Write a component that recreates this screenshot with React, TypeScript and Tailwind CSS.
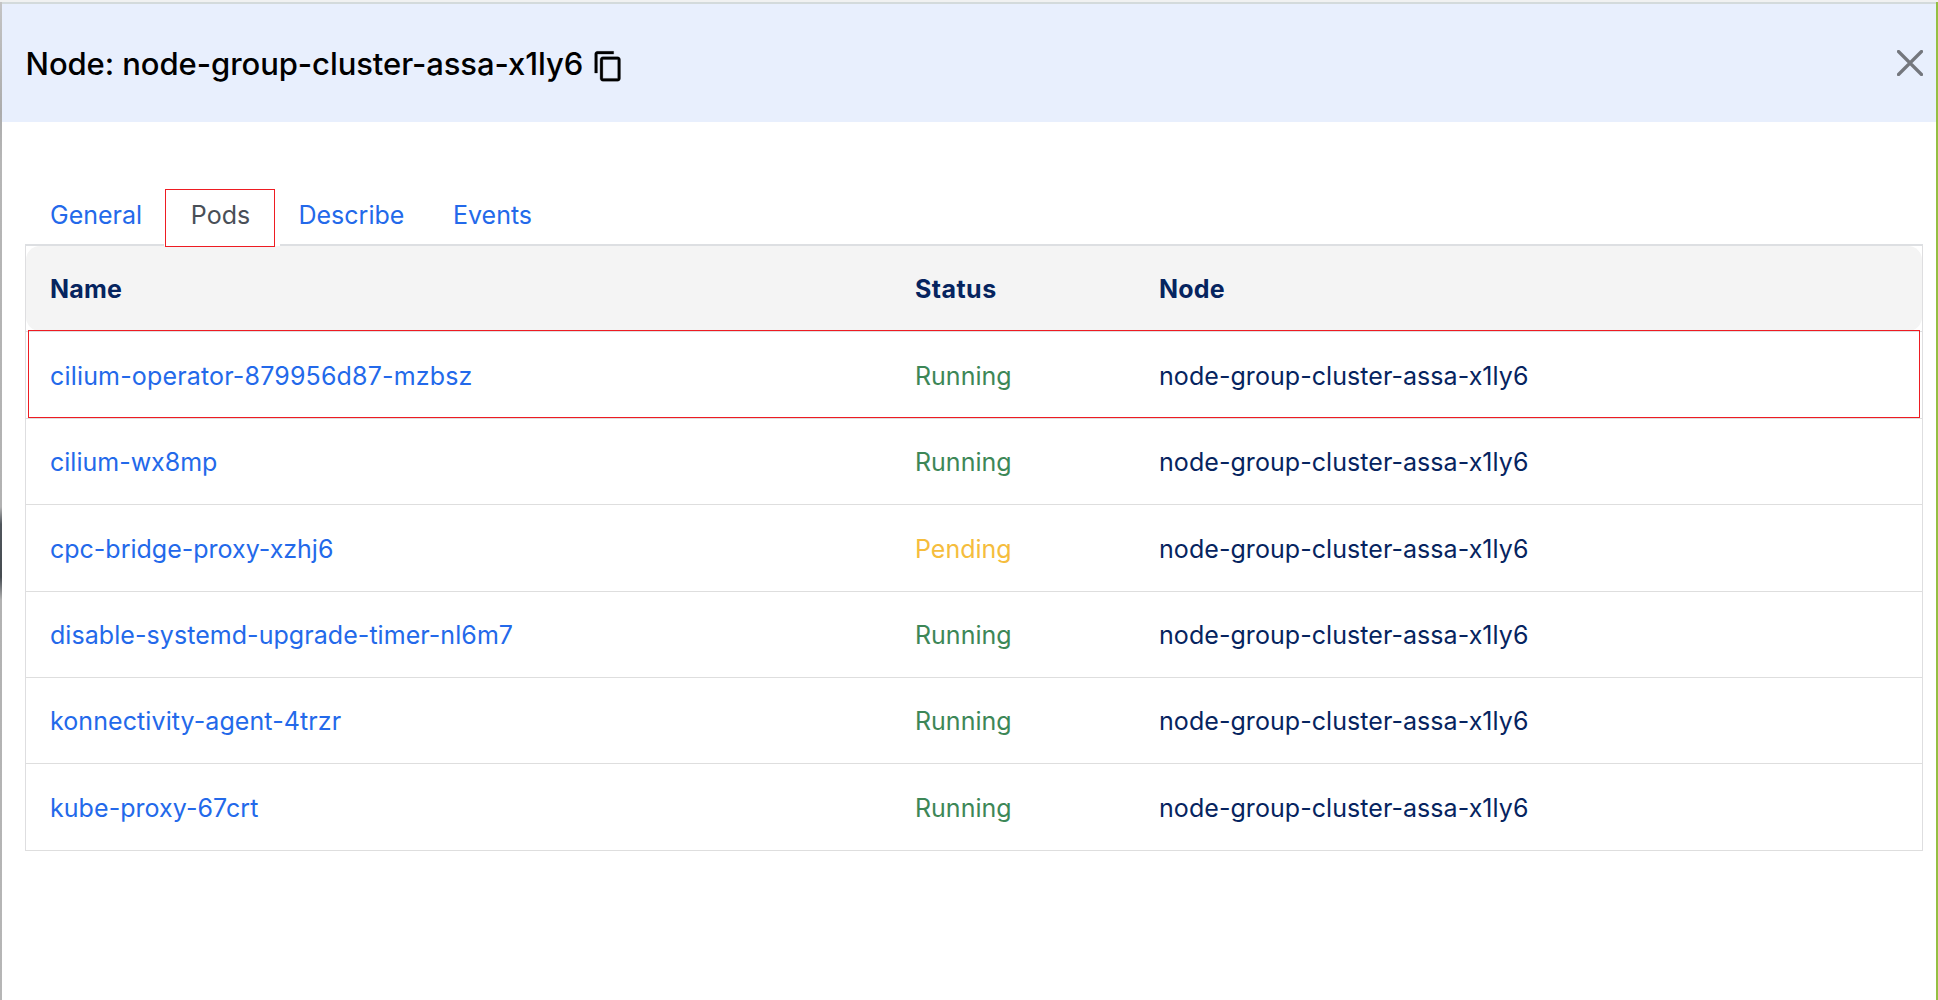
type Pod = {
  name: string;
  status: 'Running' | 'Pending';
  height: string;
  tracking: string;
  selected?: boolean;
};

const pods: Pod[] = [
  { name: 'cilium-operator-879956d87-mzbsz', status: 'Running', height: 'h-[87px] pt-[2px]', tracking: 'tracking-[0.17px]', selected: true },
  { name: 'cilium-wx8mp', status: 'Running', height: 'h-[86px]', tracking: 'tracking-normal' },
  { name: 'cpc-bridge-proxy-xzhj6', status: 'Pending', height: 'h-[87px] pt-[2px]', tracking: 'tracking-normal' },
  { name: 'disable-systemd-upgrade-timer-nl6m7', status: 'Running', height: 'h-[86px]', tracking: 'tracking-[0.06px]' },
  { name: 'konnectivity-agent-4trzr', status: 'Running', height: 'h-[86px]', tracking: 'tracking-[0.09px]' },
  { name: 'kube-proxy-67crt', status: 'Running', height: 'h-[87px] pt-[2px]', tracking: 'tracking-[0.06px]' },
];

const columns = 'grid grid-cols-[865px_244px_1fr] items-center pl-6';

function CopyIcon() {
  return (
    <svg viewBox="0 0 24 24" className="size-[32.5px] fill-black stroke-black stroke-[0.2]" aria-hidden="true">
      <path d="M16 1H4c-1.1 0-2 .9-2 2v14h2V3h12V1zm3 4H8c-1.1 0-2 .9-2 2v14c0 1.1.9 2 2 2h11c1.1 0 2-.9 2-2V7c0-1.1-.9-2-2-2zm0 16H8V7h11v14z" />
    </svg>
  );
}

function CloseIcon() {
  return (
    <svg viewBox="0 0 26 26" className="size-[26px]" aria-hidden="true">
      <path d="M1.5 1.5l23 23M24.5 1.5l-23 23" fill="none" stroke="#74777d" strokeWidth="3.2" strokeLinecap="round" />
    </svg>
  );
}

export default function App() {
  return (
    <div className="flex h-[1000px] w-[1938px] flex-col overflow-hidden bg-white font-['Inter',sans-serif] text-[25px] leading-8">
      <div className="h-[2px] shrink-0 bg-[#f0f1f1]" />
      <div className="flex min-h-0 flex-1">
        <div className="w-[2px] shrink-0 bg-[linear-gradient(to_bottom,#c4c4c4_0px,#acacac_110px,#b6b6b6_160px,#b2b2b2_505px,#50565c_522px,#454b51_575px,#b2b2b2_598px,#b6b6b6_100%)]" />
        <main className="flex min-w-0 flex-1 flex-col">
          <header className="flex h-[120px] shrink-0 items-center justify-between border-t-2 border-[#d3dadb] bg-[#e8effd] pr-[13px] pl-[23.5px]">
            <div className="flex items-center gap-[9px] pt-[2px]">
              <h1 className="text-[31px] leading-10 font-medium tracking-[-0.07px] text-black">
                Node: node-group-cluster-assa-x1ly6
              </h1>
              <button type="button" aria-label="Copy" className="mt-[5px]">
                <CopyIcon />
              </button>
            </div>
            <button type="button" aria-label="Close">
              <CloseIcon />
            </button>
          </header>

          <nav className="mt-[67px] flex h-[55px] shrink-0 items-start pl-[23px] text-[#2369ea]">
            <div className="flex h-[57px] w-[139px] items-center border-b-2 border-[#dddfe2] pb-[4px] pl-[25px]">General</div>
            <div className="relative z-10 mr-[5px] -mb-[3px] ml-px flex h-[58px] w-[110px] items-center justify-center border border-[#ee1c22] bg-white pb-[6px] pl-px text-[#494f57]">
              Pods
            </div>
            <div className="flex h-[57px] w-[172px] items-center border-b-2 border-[#dddfe2] pb-[4px] pl-[18.5px]">Describe</div>
            <div className="mr-[13px] flex h-[57px] flex-1 items-center border-b-2 border-[#dddfe2] pb-[4px] pl-px">Events</div>
          </nav>

          <section className="mt-[2px] mr-[13px] ml-[23px] flex flex-col border-x border-[#dedee0] text-[#06245f]">
            <div className={`${columns} h-[85px] rounded-[14px] bg-[#f4f4f4] font-bold`}>
              <span className="tracking-[0.2px]">Name</span>
              <span className="tracking-[0.45px]">Status</span>
              <span className="tracking-[0.2px]">Node</span>
            </div>
            <div className="h-px bg-[#dedee0]" />
            {pods.map((pod) => (
              <div key={pod.name} className={`${columns} ${pod.height} relative border-b border-[#dedede]`}>
                <a className={`${pod.tracking} text-[#2369ea]`}>{pod.name}</a>
                <span className={pod.status === 'Running' ? 'text-[#3d8757]' : 'text-[#f5bd3d]'}>{pod.status}</span>
                <span className="tracking-[0.06px]">node-group-cluster-assa-x1ly6</span>
                {pod.selected && (
                  <div className="pointer-events-none absolute -top-[2px] right-[2px] left-[2px] h-[88px] border border-[#ee1c22]" />
                )}
              </div>
            ))}
          </section>
        </main>
        <div className="w-[2px] shrink-0 bg-[#94bf43]" />
      </div>
    </div>
  );
}
